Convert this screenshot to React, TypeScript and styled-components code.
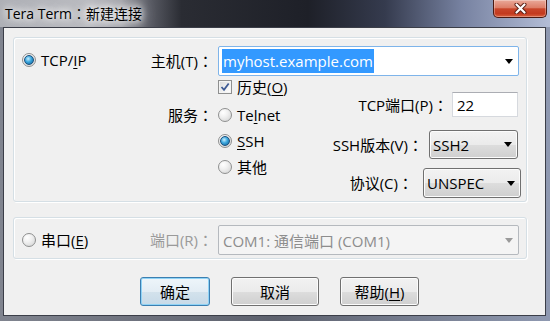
import React from "react";
import styled, { createGlobalStyle, css } from "styled-components";

const FONT = `"Open Sans", "Noto Sans CJK SC", sans-serif`;

const Global = createGlobalStyle`
  html, body { margin: 0; padding: 0; background: #fff; }
  body { font-family: ${FONT}; font-size: 15px; }
  * { box-sizing: border-box; }
`;

const Window = styled.div`
  width: 550px;
  height: 321px;
  display: flex;
  flex-direction: column;
  padding: 0 4px 5px 3px;
  overflow: hidden;
  font-family: ${FONT};
  color: #000;
  background:
    linear-gradient(90deg, #aeb0b6 0%, #b9babf 16%, #a3a4aa 22%, #5c5e67 27%, #2a2c33 33%, #1e2028 56%, #353b4e 70%, #7782a1 84%, #b3bdd6 100%) top left / 100% 27px no-repeat,
    linear-gradient(90deg, #80848f 0%, #5d616d 50%, #8f99b1 100%);
`;

const TitleBar = styled.div`
  height: 27px;
  flex: none;
  margin: 0 -4px 0 -3px;
  padding: 0 3px 0 5px;
  display: flex;
  align-items: flex-start;
  justify-content: space-between;
`;

const Title = styled.div`
  margin-top: 3px;
  font-size: 14px;
  line-height: 20px;
  color: #000;
  text-shadow: 0 0 6px #fff, 0 0 10px #fff, 0 0 16px rgba(255, 255, 255, 0.85);
`;

const Colon = styled.span`
  font-family: "Noto Sans CJK TC", "Noto Sans CJK SC", sans-serif;
`;

const CloseButton = styled.div`
  width: 54px;
  height: 18px;
  border: 1px solid #4b1a12;
  border-top: none;
  border-radius: 0 0 5px 5px;
  background: linear-gradient(180deg, #e9a99a 0%, #dd7e68 45%, #c8452a 52%, #c33a1f 80%, #d8613f 100%);
  box-shadow: inset 0 0 0 1px rgba(255, 255, 255, 0.3);
  display: flex;
  align-items: center;
  justify-content: center;
`;

const Client = styled.div`
  flex: 1;
  background: #f0f0f0;
  border: 1px solid #3b3e48;
  padding: 9px 18px 0 9px;
  display: flex;
  flex-direction: column;
`;

const Group = styled.div<{ $h: number; $mb?: number }>`
  height: ${(p) => p.$h}px;
  margin-bottom: ${(p) => p.$mb ?? 0}px;
  flex: none;
  border: 1px solid #d5dfe5;
  border-radius: 3px;
  box-shadow: inset 1px 1px 0 #fff, 1px 1px 0 #fff;
  display: flex;
  padding: 0 7px 0 8px;
`;

const LeftCol = styled.div<{ $top: number }>`
  width: 127px;
  flex: none;
  padding-top: ${(p) => p.$top}px;
`;

const Item = styled.div<{ $h: number; $mt?: number }>`
  height: ${(p) => p.$h}px;
  margin-top: ${(p) => p.$mt ?? 0}px;
  display: flex;
  align-items: center;
  gap: 5px;
  font-size: 15px;
  line-height: 20px;
  white-space: nowrap;
`;

const Radio = styled.span<{ $on?: boolean }>`
  width: 14px;
  height: 14px;
  flex: none;
  border-radius: 50%;
  border: 1px solid #8e8f8f;
  background: radial-gradient(circle at 35% 30%, #ffffff 0%, #f0f0f0 40%, #cfd0d0 100%);
  display: inline-flex;
  align-items: center;
  justify-content: center;
  &::after {
    content: "";
    width: 8px;
    height: 8px;
    border-radius: 50%;
    display: ${(p) => (p.$on ? "block" : "none")};
    border: 1px solid #1b4f7c;
    background: radial-gradient(circle at 40% 35%, #c8eeff 0%, #3aa6dd 45%, #115d92 100%);
  }
`;

const Check = styled.span`
  width: 14px;
  height: 14px;
  flex: none;
  border: 1px solid #8e8f8f;
  background: linear-gradient(135deg, #d8d9da 0%, #f6f6f6 70%, #ffffff 100%);
  box-shadow: inset 0 0 0 1px #f4f4f4;
  display: inline-flex;
  align-items: center;
  justify-content: center;
`;

const U = styled.span`
  text-decoration: underline;
  text-underline-offset: 2px;
`;

const ColB = styled.div`
  flex: 1;
  display: flex;
  flex-direction: column;
`;

const Row = styled.div<{ $h: number; $mt?: number }>`
  height: ${(p) => p.$h}px;
  margin-top: ${(p) => p.$mt ?? 0}px;
  display: flex;
  align-items: center;
  gap: 5px;
`;

const Label = styled.div<{ $gray?: boolean }>`
  width: 64px;
  flex: none;
  text-align: right;
  font-size: 15px;
  line-height: 20px;
  white-space: nowrap;
  color: ${(p) => (p.$gray ? "#9a9a9a" : "#000")};
`;

const Combo = styled.div<{ $disabled?: boolean }>`
  flex: 1;
  height: 30px;
  display: flex;
  align-items: center;
  justify-content: space-between;
  border: 1px solid ${(p) => (p.$disabled ? "#b5b9be" : "#7eb4ea")};
  border-radius: 2px;
  background: ${(p) => (p.$disabled ? "#f4f4f4" : "#fff")};
  padding: 0 5px 0 ${(p) => (p.$disabled ? 4 : 3)}px;
  font-size: 15px;
  color: ${(p) => (p.$disabled ? "#8d8d8d" : "#000")};
  white-space: nowrap;
`;

const Selected = styled.span`
  background: #3399ff;
  color: #fff;
  line-height: 24px;
  padding: 0 1px;
`;

const Arrow = styled.span<{ $gray?: boolean }>`
  width: 0;
  height: 0;
  flex: none;
  border-left: 4.5px solid transparent;
  border-right: 4.5px solid transparent;
  border-top: 5px solid ${(p) => (p.$gray ? "#9a9a9a" : "#000")};
`;

const Lower = styled.div`
  display: grid;
  grid-template-columns: 64px auto 1fr;
  column-gap: 5px;
`;

const ServiceLabel = styled(Label)`
  height: 26px;
  margin-top: 26px;
  display: flex;
  align-items: center;
  justify-content: flex-end;
`;

const RadioList = styled.div`
  display: flex;
  flex-direction: column;
`;

const RightStack = styled.div`
  justify-self: end;
  display: flex;
  flex-direction: column;
  align-items: flex-end;
`;

const FieldRow = styled.div<{ $h: number; $mt: number; $mr?: number; $gap: number }>`
  height: ${(p) => p.$h}px;
  margin-top: ${(p) => p.$mt}px;
  margin-right: ${(p) => p.$mr ?? 0}px;
  display: flex;
  align-items: center;
  gap: ${(p) => p.$gap}px;
  font-size: 15px;
  line-height: 20px;
  white-space: nowrap;
`;

const Edit = styled.div`
  width: 66px;
  height: 100%;
  background: #fff;
  border: 1px solid #d6d9de;
  border-top-color: #abadb3;
  padding-left: 4px;
  display: flex;
  align-items: center;
`;

const buttonFace = css`
  border: 1px solid #707070;
  border-radius: 3px;
  background: linear-gradient(180deg, #f2f2f2 0%, #ebebeb 50%, #dddddd 51%, #cfcfcf 100%);
  box-shadow: inset 0 0 0 1px #fcfcfc;
`;

const DropList = styled.div<{ $w: number }>`
  ${buttonFace};
  width: ${(p) => p.$w}px;
  height: 100%;
  display: flex;
  align-items: center;
  justify-content: space-between;
  padding: 0 5px 0 3px;
`;

const Group2Inner = styled.div`
  flex: 1;
  display: flex;
  align-items: flex-start;
  padding-top: 7px;
`;

const ButtonRow = styled.div`
  margin-top: 18px;
  padding-left: 127px;
  display: flex;
  gap: 21px;
`;

const Button = styled.div<{ $w: number; $default?: boolean }>`
  ${buttonFace};
  width: ${(p) => p.$w}px;
  height: 29px;
  display: flex;
  align-items: center;
  justify-content: center;
  font-size: 15px;
  ${(p) =>
    p.$default &&
    css`
      border-color: #3c7fb1;
      background: linear-gradient(180deg, #eef5fa 0%, #e3edf4 50%, #d3e2ec 51%, #c7dae8 100%);
      box-shadow: inset 0 0 0 1px #8fd3f6;
    `}
`;

function CloseGlyph() {
  return (
    <svg width="13" height="11" viewBox="0 0 13 11">
      <path d="M2.5 1.5 L10.5 9.5 M10.5 1.5 L2.5 9.5" stroke="#5a1e14" strokeWidth="4" strokeLinecap="round" />
      <path d="M2.5 1.5 L10.5 9.5 M10.5 1.5 L2.5 9.5" stroke="#ffffff" strokeWidth="2.2" strokeLinecap="round" />
    </svg>
  );
}

function CheckMark() {
  return (
    <svg width="10" height="10" viewBox="0 0 10 10">
      <path d="M1.5 5 L4 7.8 L8.7 1.5" fill="none" stroke="#3d5a94" strokeWidth="1.8" />
    </svg>
  );
}

export default function App() {
  return (
    <>
      <Global />
      <Window>
        <TitleBar>
          <Title>
            Tera Term<Colon>：</Colon>新建连接
          </Title>
          <CloseButton>
            <CloseGlyph />
          </CloseButton>
        </TitleBar>
        <Client>
          <Group $h={165} $mb={15}>
            <LeftCol $top={15}>
              <Item $h={14}>
                <Radio $on />
                <span>
                  TCP/<U>I</U>P
                </span>
              </Item>
            </LeftCol>
            <ColB>
              <Row $h={30} $mt={8}>
                <Label>
                  主机(T)<Colon>：</Colon>
                </Label>
                <Combo>
                  <Selected>myhost.example.com</Selected>
                  <Arrow />
                </Combo>
              </Row>
              <Lower>
                <ServiceLabel>
                  服务<Colon>：</Colon>
                </ServiceLabel>
                <RadioList>
                  <Item $h={14} $mt={4}>
                    <Check>
                      <CheckMark />
                    </Check>
                    <span>
                      历史(<U>O</U>)
                    </span>
                  </Item>
                  <Item $h={26} $mt={8}>
                    <Radio />
                    <span>
                      Te<U>l</U>net
                    </span>
                  </Item>
                  <Item $h={26}>
                    <Radio $on />
                    <span>
                      <U>S</U>SH
                    </span>
                  </Item>
                  <Item $h={26}>
                    <Radio />
                    <span>其他</span>
                  </Item>
                </RadioList>
                <RightStack>
                  <FieldRow $h={25} $mt={16} $mr={1} $gap={4}>
                    <span>
                      TCP端口(P)<Colon>：</Colon>
                    </span>
                    <Edit>22</Edit>
                  </FieldRow>
                  <FieldRow $h={29} $mt={13} $mr={1} $gap={6}>
                    <span>
                      SSH版本(V)<Colon>：</Colon>
                    </span>
                    <DropList $w={89}>
                      <span>SSH2</span>
                      <Arrow />
                    </DropList>
                  </FieldRow>
                  <FieldRow $h={30} $mt={9} $mr={-2} $gap={10}>
                    <span>
                      协议(C)<Colon>：</Colon>
                    </span>
                    <DropList $w={98}>
                      <span>UNSPEC</span>
                      <Arrow />
                    </DropList>
                  </FieldRow>
                </RightStack>
              </Lower>
            </ColB>
          </Group>
          <Group $h={42}>
            <Group2Inner>
              <LeftCol $top={0}>
                <Item $h={30}>
                  <Radio />
                  <span>
                    串口(<U>E</U>)
                  </span>
                </Item>
              </LeftCol>
              <ColB>
                <Row $h={30}>
                  <Label $gray>
                    端口(R)<Colon>：</Colon>
                  </Label>
                  <Combo $disabled>
                    <span>COM1: 通信端口 (COM1)</span>
                    <Arrow $gray />
                  </Combo>
                </Row>
              </ColB>
            </Group2Inner>
          </Group>
          <ButtonRow>
            <Button $w={70} $default>
              确定
            </Button>
            <Button $w={88}>取消</Button>
            <Button $w={79}>
              帮助(<U>H</U>)
            </Button>
          </ButtonRow>
        </Client>
      </Window>
    </>
  );
}
